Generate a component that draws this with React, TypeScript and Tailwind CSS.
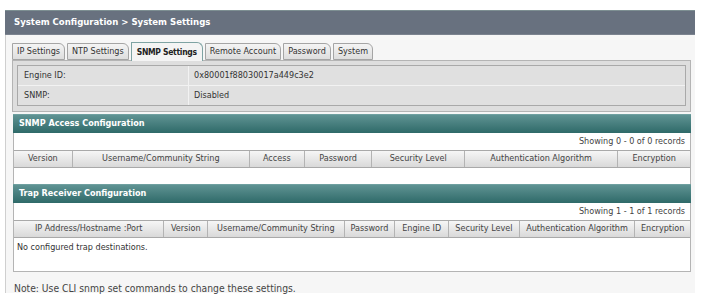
import React from 'react';

const tabs = ['IP Settings', 'NTP Settings', 'SNMP Settings', 'Remote Account', 'Password', 'System'];

const accessCols = [
  { label: 'Version', w: 58 },
  { label: 'Username/Community String', w: 178 },
  { label: 'Access', w: 55 },
  { label: 'Password', w: 68 },
  { label: 'Security Level', w: 93 },
  { label: 'Authentication Algorithm', w: 154 },
  { label: 'Encryption', w: 73 },
];

const trapCols = [
  { label: 'IP Address/Hostname :Port', w: 150 },
  { label: 'Version', w: 44 },
  { label: 'Username/Community String', w: 137 },
  { label: 'Password', w: 51 },
  { label: 'Engine ID', w: 54 },
  { label: 'Security Level', w: 71 },
  { label: 'Authentication Algorithm', w: 116 },
  { label: 'Encryption', w: 56 },
];

function SectionHeader({ title }: { title: string }) {
  return (
    <div className="h-[19px] flex items-center pl-[6px] border-t border-[#6fa0a0] bg-gradient-to-b from-[#5f9393] to-[#2e6a69] text-white font-bold text-[9px]">
      {title}
    </div>
  );
}

function TableHead({ cols }: { cols: { label: string; w: number }[] }) {
  return (
    <div className="flex h-[18px] border-y border-[#a9a9a9] bg-gradient-to-b from-[#f6f6f6] to-[#d9d9d9]">
      {cols.map((c, i) => (
        <div
          key={c.label}
          style={{ width: c.w }}
          className={`flex items-center justify-center text-[#444] ${i > 0 ? 'border-l border-[#b3b3b3]' : ''}`}
        >
          {c.label}
        </div>
      ))}
    </div>
  );
}

export default function App() {
  return (
    <div className="w-[701px] h-[305px] bg-white pt-[10px] pl-[5px] pr-[6px] font-['DejaVu_Sans_Condensed','DejaVu_Sans',sans-serif] text-[9px] text-[#333]">
      {/* Title bar */}
      <div className="h-[25px] flex items-center pl-[9px] bg-[#68717f] border-t border-[#7d8f92] border-b border-b-[#7b838f] text-white font-bold text-[9.5px]">
        System Configuration &gt; System Settings
      </div>

      <div className="h-[258px] bg-[#f6f6f6] border-l border-[#cfcfcf] pl-[6px] pr-[4px] pt-[8px]">
        {/* Tabs */}
        <div className="flex items-end gap-[2px] h-[17px]">
          {tabs.map((t) => {
            const active = t === 'SNMP Settings';
            return (
              <div
                key={t}
                className={
                  active
                    ? 'h-[19px] -mb-px px-[5px] flex items-center rounded-tr-[6px] border border-b-0 border-[#7ea3a3] bg-[#f4f4f4] font-bold text-[8.5px] tracking-[-0.3px] text-[#222] z-10'
                    : 'h-[17px] px-[4px] flex items-center rounded-tr-[6px] border border-[#a5a5a5] bg-gradient-to-b from-[#f4f4f4] to-[#dedede] text-[#333]'
                }
              >
                {t}
              </div>
            );
          })}
        </div>

        {/* Tab panel */}
        <div className="border border-[#b4b4b4] bg-[#dedede] px-[4px] pt-[4px] pb-[5px]">
          <div className="border border-[#a9a9a9] bg-[#e0e0e0]">
            <div className="flex h-[20px] border-b border-[#f2f2f2]">
              <div className="w-[171px] pl-[6px] flex items-center border-r border-[#f2f2f2]">Engine ID:</div>
              <div className="pl-[5px] flex items-center">0x80001f88030017a449c3e2</div>
            </div>
            <div className="flex h-[19px]">
              <div className="w-[171px] pl-[6px] flex items-center border-r border-[#f2f2f2]">SNMP:</div>
              <div className="pl-[5px] flex items-center">Disabled</div>
            </div>
          </div>
        </div>

        {/* SNMP Access Configuration */}
        <div className="mt-[2px] ml-px">
          <SectionHeader title="SNMP Access Configuration" />
          <div className="bg-white border-x border-[#b4b4b4]">
            <div className="h-[17px] flex items-center justify-end pr-[5px] text-[#444]">
              Showing 0 - 0 of 0 records
            </div>
            <TableHead cols={accessCols} />
            <div className="h-[16px]" />
          </div>
        </div>

        {/* Trap Receiver Configuration */}
        <div className="ml-px">
          <SectionHeader title="Trap Receiver Configuration" />
          <div className="bg-white border-x border-b border-[#b4b4b4]">
            <div className="h-[17px] flex items-center justify-end pr-[5px] text-[#444]">
              Showing 1 - 1 of 1 records
            </div>
            <TableHead cols={trapCols} />
            <div className="h-[33px] pl-[3px] pt-[3px] text-[#333]">No configured trap destinations.</div>
          </div>
        </div>

        <div className="mt-[9px] pl-[2px] text-[10.25px] text-[#444]">
          Note: Use CLI snmp set commands to change these settings.
        </div>
      </div>
    </div>
  );
}
